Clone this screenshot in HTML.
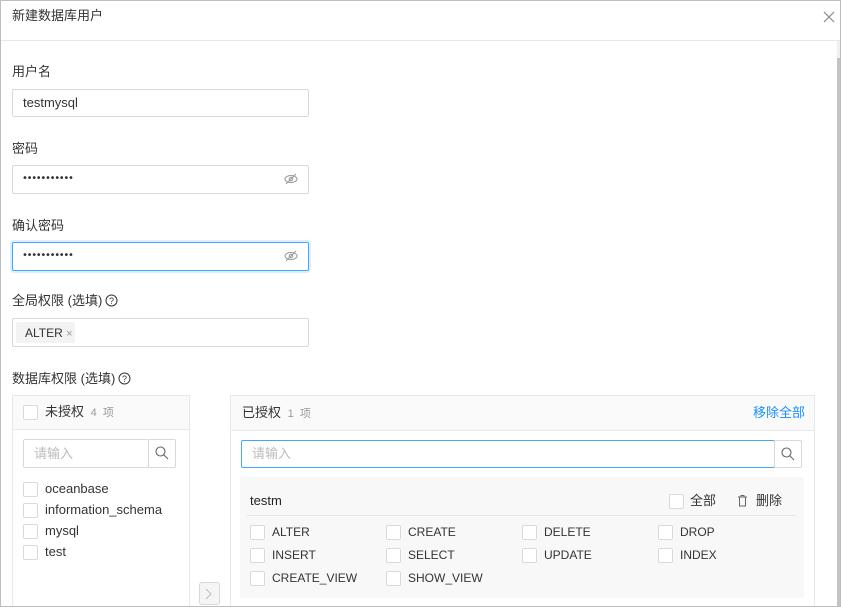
<!DOCTYPE html>
<html><head><meta charset="utf-8"><style>
*{box-sizing:border-box;margin:0;padding:0}
html,body{width:841px;height:607px;overflow:hidden}
body{background:#fff;font-family:"Liberation Sans","Noto Sans CJK SC",sans-serif;font-size:12px;color:#333;position:relative}
.a{position:absolute}
.frame{left:0;top:0;width:841px;height:607px;border:1px solid #bdbdbd}
.lbl{font-size:13px;color:#333;line-height:16px}
.inp{border:1px solid #d9d9d9;background:#fff;border-radius:2px}
.cb{position:absolute;width:15px;height:15px;border:1px solid #d9d9d9;background:#fff;border-radius:2px}
.t{position:absolute;line-height:16px;white-space:nowrap}
.dots{position:absolute;line-height:16px;font-size:10px;letter-spacing:-1.3px;font-family:"DejaVu Sans",sans-serif}
</style></head><body>
<div class="t" style="left:12px;top:8px;font-size:13px">新建数据库用户</div>
<svg class="a" style="left:823px;top:11px" width="12" height="12"><path d="M1 1L11 11M11 1L1 11" stroke="#888" stroke-width="1.2"/></svg>
<div class="a" style="left:1px;top:40px;width:839px;height:1px;background:#e8e8e8"></div>
<div class="a" style="left:837px;top:41px;width:3px;height:566px;background:#f0f0f0"></div>
<div class="a" style="left:837px;top:58px;width:3px;height:549px;background:#c4c4c4"></div>

<div class="t lbl" style="left:12px;top:64px">用户名</div>
<div class="a inp" style="left:12px;top:89px;width:297px;height:28px"></div>
<div class="t" style="left:23px;top:95px;font-size:13px">testmysql</div>

<div class="t lbl" style="left:12px;top:141px">密码</div>
<div class="a inp" style="left:12px;top:165px;width:297px;height:29px"></div>
<div class="dots" style="left:22px;top:171px">•••••••••••</div>
<svg class="a" style="left:284px;top:173px" width="14" height="12"><ellipse cx="7" cy="6" rx="6" ry="3.5" fill="none" stroke="#999"/><circle cx="7" cy="6" r="1.8" fill="none" stroke="#999"/><path d="M2 11L12 1" stroke="#999"/></svg>

<div class="t lbl" style="left:12px;top:218px">确认密码</div>
<div class="a inp" style="left:12px;top:242px;width:297px;height:29px;border-color:#40a9ff;box-shadow:0 0 0 2px rgba(24,144,255,.15)"></div>
<div class="dots" style="left:22px;top:248px">•••••••••••</div>
<svg class="a" style="left:284px;top:250px" width="14" height="12"><ellipse cx="7" cy="6" rx="6" ry="3.5" fill="none" stroke="#999"/><circle cx="7" cy="6" r="1.8" fill="none" stroke="#999"/><path d="M2 11L12 1" stroke="#999"/></svg>

<div class="t lbl" style="left:12px;top:293px">全局权限 (选填)</div>
<svg class="a" style="left:105px;top:294px" width="13" height="13"><circle cx="6.5" cy="6.5" r="5.5" fill="none" stroke="#333"/><text x="6.5" y="10" font-size="9" text-anchor="middle" fill="#333" font-family="Liberation Sans">?</text></svg>
<div class="a inp" style="left:12px;top:318px;width:297px;height:29px"></div>
<div class="a" style="left:16px;top:322px;width:59px;height:21px;background:#f3f3f3;border-radius:2px"></div>
<div class="t" style="left:25px;top:325px;font-size:12px">ALTER <span style="color:#999;font-size:11px">×</span></div>

<div class="t lbl" style="left:12px;top:371px">数据库权限 (选填)</div>
<svg class="a" style="left:118px;top:372px" width="13" height="13"><circle cx="6.5" cy="6.5" r="5.5" fill="none" stroke="#333"/><text x="6.5" y="10" font-size="9" text-anchor="middle" fill="#333" font-family="Liberation Sans">?</text></svg>

<div class="a" style="left:12px;top:395px;width:178px;height:212px;border:1px solid #e8e8e8;border-bottom:none"></div>
<div class="a" style="left:13px;top:396px;width:176px;height:34px;background:#fafafa;border-bottom:1px solid #e8e8e8"></div>
<div class="cb" style="left:23px;top:405px"></div>
<div class="t" style="left:45px;top:404px;font-size:13px">未授权 <span style="color:#999;font-size:11px">&nbsp;4 &nbsp;项</span></div>
<div class="a inp" style="left:23px;top:439px;width:126px;height:29px"></div>
<div class="t" style="left:34px;top:446px;color:#bbb;font-size:13px">请输入</div>
<div class="a inp" style="left:148px;top:439px;width:28px;height:29px"></div>
<svg class="a" style="left:155px;top:446px" width="14" height="14"><circle cx="5.5" cy="5.5" r="4.5" fill="none" stroke="#666" stroke-width="1.1"/><path d="M9 9L13 13" stroke="#666" stroke-width="1.1"/></svg>
<div class="cb" style="left:23px;top:482px"></div><div class="t" style="left:45px;top:481px;font-size:13px">oceanbase</div>
<div class="cb" style="left:23px;top:503px"></div><div class="t" style="left:45px;top:502px;font-size:13px">information_schema</div>
<div class="cb" style="left:23px;top:524px"></div><div class="t" style="left:45px;top:523px;font-size:13px">mysql</div>
<div class="cb" style="left:23px;top:545px"></div><div class="t" style="left:45px;top:544px;font-size:13px">test</div>

<div class="a" style="left:199px;top:582px;width:21px;height:23px;border:1px solid #d9d9d9;background:#f5f5f5;border-radius:3px"></div>
<svg class="a" style="left:205px;top:588px" width="8" height="12"><path d="M1 1L6 6L1 11" fill="none" stroke="#bbb"/></svg>

<div class="a" style="left:230px;top:395px;width:585px;height:212px;border:1px solid #e8e8e8;border-bottom:none"></div>
<div class="a" style="left:231px;top:396px;width:583px;height:35px;background:#fafafa;border-bottom:1px solid #e8e8e8"></div>
<div class="t" style="left:242px;top:405px;font-size:13px">已授权 <span style="color:#999;font-size:11px">&nbsp;1 &nbsp;项</span></div>
<div class="t" style="left:753px;top:405px;font-size:13px;color:#1890ff">移除全部</div>
<div class="a inp" style="left:241px;top:440px;width:534px;height:28px;border-color:#40a9ff"></div>
<div class="t" style="left:252px;top:446px;color:#bbb;font-size:13px">请输入</div>
<div class="a inp" style="left:774px;top:440px;width:28px;height:28px"></div>
<svg class="a" style="left:781px;top:447px" width="14" height="14"><circle cx="5.5" cy="5.5" r="4.5" fill="none" stroke="#666" stroke-width="1.1"/><path d="M9 9L13 13" stroke="#666" stroke-width="1.1"/></svg>

<div class="a" style="left:240px;top:477px;width:564px;height:121px;background:#f8f8f8"></div>
<div class="t" style="left:250px;top:493px;font-size:13px;color:#222">testm</div>
<div class="cb" style="left:669px;top:494px"></div><div class="t" style="left:690px;top:493px;font-size:13px">全部</div>
<svg class="a" style="left:737px;top:494px" width="11" height="13"><path d="M1 3H10M4 3V1.5H7V3M2.5 3V12H8.5V3" fill="none" stroke="#666"/></svg>
<div class="t" style="left:756px;top:493px;font-size:13px">删除</div>
<div class="a" style="left:247px;top:515px;width:549px;height:1px;background:#e6e6e6"></div>

<div class="cb" style="left:250px;top:525px"></div><div class="t" style="left:272px;top:524px">ALTER</div>
<div class="cb" style="left:386px;top:525px"></div><div class="t" style="left:408px;top:524px">CREATE</div>
<div class="cb" style="left:522px;top:525px"></div><div class="t" style="left:544px;top:524px">DELETE</div>
<div class="cb" style="left:658px;top:525px"></div><div class="t" style="left:680px;top:524px">DROP</div>
<div class="cb" style="left:250px;top:548px"></div><div class="t" style="left:272px;top:547px">INSERT</div>
<div class="cb" style="left:386px;top:548px"></div><div class="t" style="left:408px;top:547px">SELECT</div>
<div class="cb" style="left:522px;top:548px"></div><div class="t" style="left:544px;top:547px">UPDATE</div>
<div class="cb" style="left:658px;top:548px"></div><div class="t" style="left:680px;top:547px">INDEX</div>
<div class="cb" style="left:250px;top:571px"></div><div class="t" style="left:272px;top:570px">CREATE_VIEW</div>
<div class="cb" style="left:386px;top:571px"></div><div class="t" style="left:408px;top:570px">SHOW_VIEW</div>
<div class="a frame"></div>
</body></html>
